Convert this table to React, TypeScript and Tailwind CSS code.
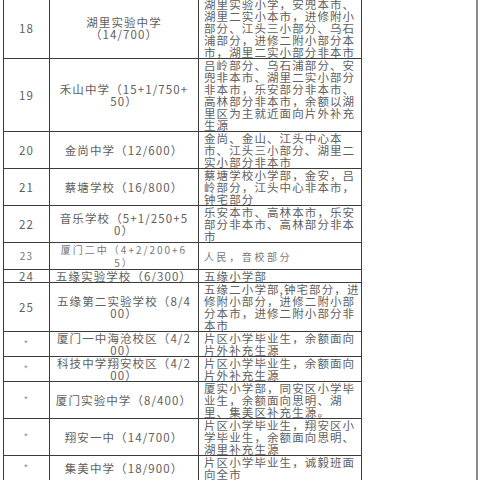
type Row = {
  no: string;
  name: string[];
  desc: string[];
  small?: boolean;
};

const rows: Row[] = [
  {
    no: '18',
    name: ['湖里实验中学', '（14/700）'],
    desc: ['湖里实验小学，安兜本市、', '湖里二实小本市，进修附小', '部分、江头三小部分、乌石', '浦部分，进修二附小部分本', '市，湖里二实小部分非本市'],
  },
  {
    no: '19',
    name: ['禾山中学（15+1/750+', '50）'],
    desc: ['吕岭部分、乌石浦部分、安', '兜非本市、湖里二实小部分', '非本市，乐安部分非本市、', '高林部分非本市，余额以湖', '里区为主就近面向片外补充', '生源'],
  },
  {
    no: '20',
    name: ['金尚中学（12/600）'],
    desc: ['金尚、金山、江头中心本', '市、江头三小部分、湖里二', '实小部分非本市'],
  },
  {
    no: '21',
    name: ['蔡塘学校（16/800）'],
    desc: ['蔡塘学校小学部，金安，吕', '岭部分，江头中心非本市，', '钟宅部分'],
  },
  {
    no: '22',
    name: ['音乐学校（5+1/250+5', '0）'],
    desc: ['乐安本市、高林本市，乐安', '部分非本市、高林部分非本', '市'],
  },
  {
    no: '23',
    name: ['厦门二中（4+2/200+6', '5）'],
    desc: ['人民，音校部分'],
    small: true,
  },
  {
    no: '24',
    name: ['五缘实验学校（6/300）'],
    desc: ['五缘小学部'],
  },
  {
    no: '25',
    name: ['五缘第二实验学校（8/4', '00）'],
    desc: ['五缘二小学部,钟宅部分，进', '修附小部分，进修二附小部', '分本市，进修二附小部分非', '本市'],
  },
  {
    no: '*',
    name: ['厦门一中海沧校区（4/2', '00）'],
    desc: ['片区小学毕业生，余额面向', '片外补充生源'],
  },
  {
    no: '*',
    name: ['科技中学翔安校区（4/2', '00）'],
    desc: ['片区小学毕业生，余额面向', '片外补充生源'],
  },
  {
    no: '*',
    name: ['厦门实验中学（8/400）'],
    desc: ['厦实小学部，同安区小学毕', '业生，余额面向思明、湖', '里、集美区补充生源。'],
  },
  {
    no: '*',
    name: ['翔安一中（14/700）'],
    desc: ['片区小学毕业生，翔安区小', '学毕业生，余额面向思明、', '湖里补充生源'],
  },
  {
    no: '*',
    name: ['集美中学（18/900）'],
    desc: ['片区小学毕业生，诚毅班面', '向全市'],
  },
];

function Lines({ lines }: { lines: string[] }) {
  return (
    <>
      {lines.map((l, i) => (
        <div key={i} className="whitespace-nowrap">
          {l}
        </div>
      ))}
    </>
  );
}

export default function App() {
  return (
    <div
      className="w-[480px] h-[480px] overflow-hidden bg-white"
      style={{ fontFamily: '"Noto Sans CJK SC", "Noto Sans", sans-serif' }}
    >
      <div className="w-[478px] min-h-[490px] pl-[3px] border-r-2 border-[#8c8c8c] -mt-[3px]">
        <table className="border-collapse w-[358px] table-fixed text-[11.5px] leading-[12px] text-[#606060] tracking-[1.1px]">
          <colgroup>
            <col className="w-[46px]" />
            <col className="w-[149px]" />
            <col className="w-[163px]" />
          </colgroup>
          <tbody>
            {rows.map((r, i) => (
              <tr key={i}>
                <td
                  className={`border border-[#3c3c3c] text-center align-middle ${
                    r.no === '*' ? 'text-[10px] text-[#999]' : ''
                  } ${r.small ? 'text-[10px] text-[#777]' : ''}`}
                >
                  {r.no}
                </td>
                <td
                  className={`border border-[#3c3c3c] text-center align-middle ${
                    r.small ? 'text-[10px] leading-[13px] tracking-[2px] text-[#777]' : ''
                  }`}
                >
                  <Lines lines={r.name} />
                </td>
                <td
                  className={`border border-[#3c3c3c] align-middle pl-[5px] ${
                    r.small ? 'text-[10px] leading-[13px] tracking-[2.6px] text-[#777]' : ''
                  }`}
                >
                  <Lines lines={r.desc} />
                </td>
              </tr>
            ))}
          </tbody>
        </table>
      </div>
    </div>
  );
}
